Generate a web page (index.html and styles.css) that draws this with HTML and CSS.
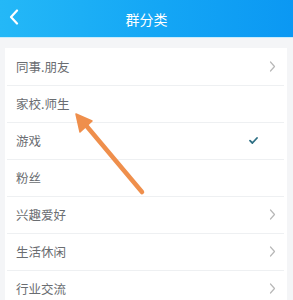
FILE: index.html
```html
<!DOCTYPE html>
<html lang="zh">
<head>
<meta charset="utf-8">
<link rel="stylesheet" href="styles.css">
</head>
<body>
<header class="topbar">
  <svg class="back" width="10" height="16" viewBox="0 0 10 16"><path d="M8 1.5 L2 8 L8 14.5" fill="none" stroke="#fff" stroke-width="2.2" stroke-linecap="round" stroke-linejoin="round"/></svg>
  <h1 class="title">群分类</h1>
</header>
<main class="content">
  <ul class="list">
    <li class="row"><span>同事.朋友</span><svg class="chev" width="7" height="11" viewBox="0 0 7 11"><path d="M1.5 1 L5.5 5.5 L1.5 10" fill="none" stroke="#b8b8b8" stroke-width="1.2" stroke-linecap="round" stroke-linejoin="round"/></svg></li>
    <li class="row"><span>家校.师生</span></li>
    <li class="row"><span>游戏</span><svg class="check" width="9" height="7" viewBox="0 0 9 7"><path d="M1 3.6 L3.4 6 L8 1" fill="none" stroke="#2d6f84" stroke-width="1.8" stroke-linecap="round" stroke-linejoin="round"/></svg></li>
    <li class="row"><span>粉丝</span></li>
    <li class="row"><span>兴趣爱好</span><svg class="chev" width="7" height="11" viewBox="0 0 7 11"><path d="M1.5 1 L5.5 5.5 L1.5 10" fill="none" stroke="#b8b8b8" stroke-width="1.2" stroke-linecap="round" stroke-linejoin="round"/></svg></li>
    <li class="row"><span>生活休闲</span><svg class="chev" width="7" height="11" viewBox="0 0 7 11"><path d="M1.5 1 L5.5 5.5 L1.5 10" fill="none" stroke="#b8b8b8" stroke-width="1.2" stroke-linecap="round" stroke-linejoin="round"/></svg></li>
    <li class="row"><span>行业交流</span><svg class="chev" width="7" height="11" viewBox="0 0 7 11"><path d="M1.5 1 L5.5 5.5 L1.5 10" fill="none" stroke="#b8b8b8" stroke-width="1.2" stroke-linecap="round" stroke-linejoin="round"/></svg></li>
  </ul>
</main>
<svg class="pointer" width="293" height="300" viewBox="0 0 293 300">
  <line x1="142" y1="192" x2="84" y2="123" stroke="#ef8f4c" stroke-width="4.5" stroke-linecap="round"/>
  <polygon points="76,114 92,121 80,132" fill="#ef8f4c" stroke="#ef8f4c" stroke-width="1.5" stroke-linejoin="round"/>
</svg>
</body>
</html>
```
FILE: styles.css
```css
html, body {
  margin: 0;
  padding: 0;
}
body {
  width: 293px;
  height: 300px;
  overflow: hidden;
  background: #f4f5f7;
  font-family: "Noto Sans CJK SC", "Noto Sans", sans-serif;
  position: relative;
}
.topbar {
  height: 37px;
  background: linear-gradient(90deg, #24b8f7 0%, #14a6f5 55%, #0b98f3 100%);
  border-bottom: 1px solid #c9ecfc;
  display: flex;
  align-items: center;
  justify-content: center;
  position: relative;
}
.back {
  position: absolute;
  left: 9px;
  top: 9px;
}
.title {
  margin: 0;
  font-size: 14px;
  font-weight: 400;
  color: #ffffff;
  line-height: 1;
}
.content {
  padding: 10px 6px 0 5px;
}
.list {
  list-style: none;
  margin: 0;
  padding: 0;
  background: #ffffff;
}
.row {
  height: 37px;
  display: flex;
  align-items: center;
  justify-content: space-between;
  padding: 0 11px 0 11px;
  font-size: 12.5px;
  color: #6a6d71;
  position: relative;
}
.row + .row::before {
  content: "";
  position: absolute;
  left: 2px;
  right: 3px;
  top: 0;
  border-top: 1px solid #eef0f2;
}
.check {
  margin-right: 18px;
}
.pointer {
  position: absolute;
  left: 0;
  top: 0;
  pointer-events: none;
}
```
